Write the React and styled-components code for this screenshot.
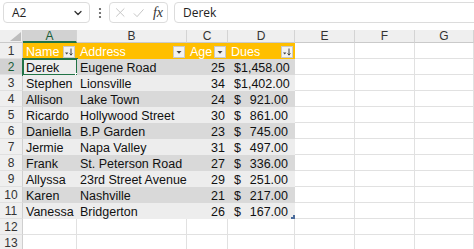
import React from 'react'
import styled, { createGlobalStyle } from 'styled-components'
import { ChevronDown } from 'lucide-react'

const GlobalStyle = createGlobalStyle`
  html, body {
    margin: 0;
    padding: 0;
    background: #fff;
    overflow: hidden;
  }
  body {
    font-family: "Liberation Sans", Arial, sans-serif;
  }
  * { box-sizing: border-box; }
`

const columns = [
  { key: 'A', w: 54 },
  { key: 'B', w: 110 },
  { key: 'C', w: 41 },
  { key: 'D', w: 67 },
  { key: 'E', w: 60 },
  { key: 'F', w: 60 },
  { key: 'G', w: 60 },
]

const people = [
  ['Derek', 'Eugene Road', 25, '1,458.00'],
  ['Stephen', 'Lionsville', 34, '1,402.00'],
  ['Allison', 'Lake Town', 24, '921.00'],
  ['Ricardo', 'Hollywood Street', 30, '861.00'],
  ['Daniella', 'B.P Garden', 23, '745.00'],
  ['Jermie', 'Napa Valley', 31, '497.00'],
  ['Frank', 'St. Peterson Road', 27, '336.00'],
  ['Allyssa', '23rd Street Avenue', 29, '251.00'],
  ['Karen', 'Nashville', 21, '217.00'],
  ['Vanessa', 'Bridgerton', 26, '167.00'],
]

const headers = [
  { label: 'Name', icon: 'sort' },
  { label: 'Address', icon: 'drop' },
  { label: 'Age', icon: 'drop' },
  { label: 'Dues', icon: 'sort' },
]

const FilterIcon = ({ kind }) => (
  <svg width="10" height="10" viewBox="0 0 10 10">
    {kind === 'drop' ? (
      <path d="M2.5 4 L7.5 4 L5 6.8 Z" fill="#444" />
    ) : (
      <>
        <path d="M1 5.5 L4.4 5.5 L2.7 7.5 Z" fill="#444" />
        <path d="M7 1.5 L7 8" stroke="#444" strokeWidth="1" />
        <path d="M5.6 6.4 L7 8.2 L8.4 6.4" stroke="#444" strokeWidth="1" fill="none" />
      </>
    )}
  </svg>
)

const Spreadsheet = () => {
  const rows = []
  for (let r = 1; r <= 13; r++) rows.push(r)

  const renderCell = (r, ci) => {
    const col = columns[ci]
    if (r === 1 && ci < 4) {
      const h = headers[ci]
      return (
        <HeadCell key={col.key}>
          <span>{h.label}</span>
          <FilterButton>
            <FilterIcon kind={h.icon} />
          </FilterButton>
        </HeadCell>
      )
    }
    if (r >= 2 && r <= 11 && ci < 4) {
      const p = people[r - 2]
      const band = r % 2 === 0 ? 'dark' : 'light'
      const selected = r === 2 && ci === 0
      const last = r === 11 && ci === 3
      if (ci === 3) {
        return (
          <BodyCell key={col.key} $band={band} $money>
            <span>$</span>
            <span>{p[3]}</span>
            {last && <ResizeCorner />}
          </BodyCell>
        )
      }
      return (
        <BodyCell key={col.key} $band={selected ? 'light' : band} $align={ci === 2 ? 'right' : 'left'}>
          {p[ci]}
          {selected && (
            <>
              <Selection />
              <FillHandle />
            </>
          )}
        </BodyCell>
      )
    }
    return <EmptyCell key={col.key} />
  }

  return (
    <Page>
      <GlobalStyle />
      <Toolbar>
        <NameBox>
          <span>A2</span>
          <ChevronDown size={12} strokeWidth={2.6} color="#333" />
        </NameBox>
        <Dots>
          <svg width="4" height="12" viewBox="0 0 4 12">
            <circle cx="2" cy="2" r="1.1" fill="#555" />
            <circle cx="2" cy="6" r="1.1" fill="#555" />
            <circle cx="2" cy="10" r="1.1" fill="#555" />
          </svg>
        </Dots>
        <FxBox>
          <svg width="13" height="13" viewBox="0 0 13 13">
            <path d="M1.5 1.5 L11.5 11.5 M11.5 1.5 L1.5 11.5" stroke="#c4c4c4" strokeWidth="1.2" />
          </svg>
          <svg width="14" height="12" viewBox="0 0 14 12">
            <path d="M1 6.5 L5 10.5 L13 1.5" stroke="#c4c4c4" strokeWidth="1.2" fill="none" />
          </svg>
          <FxLabel>fx</FxLabel>
        </FxBox>
        <Formula>Derek</Formula>
      </Toolbar>
      <Sheet>
        <Corner>
          <svg width="11" height="9" viewBox="0 0 11 9">
            <path d="M11 0 L11 9 L0 9 Z" fill="#bdbdbd" />
          </svg>
        </Corner>
        {columns.map((c) => (
          <ColHead key={c.key} $selected={c.key === 'A'}>
            {c.key}
          </ColHead>
        ))}
        {rows.map((r) => (
          <React.Fragment key={r}>
            <RowHead $selected={r === 2}>{r}</RowHead>
            {columns.map((c, ci) => renderCell(r, ci))}
          </React.Fragment>
        ))}
      </Sheet>
    </Page>
  )
}

export default Spreadsheet

const Page = styled.div`
  width: 474px;
  height: 249px;
  overflow: hidden;
`

const Toolbar = styled.div`
  display: flex;
  align-items: stretch;
  height: 23px;
  padding: 2px 0 0 3px;
  font-family: "Open Sans", "Noto Sans", sans-serif;
  font-size: 12px;
  color: #222;
`

const Box = styled.div`
  border: 1px solid #dcdcdc;
  border-radius: 4px;
  background: #fff;
  display: flex;
  align-items: center;
`

const NameBox = styled(Box)`
  width: 87px;
  justify-content: space-between;
  padding: 0 5px 0 8px;
`

const Dots = styled.div`
  width: 19px;
  display: flex;
  align-items: center;
  justify-content: center;
`

const FxBox = styled(Box)`
  width: 59px;
  padding: 0 4px 0 5px;
  gap: 7px;
`

const FxLabel = styled.span`
  font-family: "Liberation Serif", "Times New Roman", serif;
  font-style: italic;
  font-size: 14px;
  color: #333;
  margin-left: 2px;
`

const Formula = styled(Box)`
  flex: 1;
  margin-left: 6px;
  margin-right: -10px;
  padding-left: 8px;
`

const Sheet = styled.div`
  display: grid;
  grid-template-columns: 23px 54px 110px 41px 67px 60px 60px 1fr;
  grid-template-rows: 13px repeat(13, 16px);
  margin-top: 7px;
  font-size: 12.5px;
  color: #111;
`

const Corner = styled.div`
  background: #efefef;
  border-right: 1px solid #d0d0d0;
  border-bottom: 1px solid #cacaca;
  display: flex;
  align-items: flex-end;
  justify-content: flex-end;
  padding: 0 1px 1px 0;
`

const ColHead = styled.div`
  background: ${(p) => (p.$selected ? '#d2d2d2' : '#efefef')};
  color: ${(p) => (p.$selected ? '#185c37' : '#333')};
  border-right: 1px solid #d4d4d4;
  border-bottom: ${(p) => (p.$selected ? '2px solid #217346' : '1px solid #cacaca')};
  display: flex;
  align-items: center;
  justify-content: center;
  font-size: 12px;
  line-height: 1;
`

const RowHead = styled.div`
  background: ${(p) => (p.$selected ? '#d2d2d2' : '#efefef')};
  color: ${(p) => (p.$selected ? '#185c37' : '#333')};
  border-right: ${(p) => (p.$selected ? '1px solid #217346' : '1px solid #cfcfcf')};
  border-bottom: 1px solid #e0e0e0;
  display: flex;
  align-items: center;
  justify-content: center;
  font-size: 12px;
  padding-top: 1px;
`

const HeadCell = styled.div`
  background: #ffbf00;
  color: #fff;
  display: flex;
  align-items: center;
  justify-content: space-between;
  padding: 1px 2px 0 3px;
  white-space: nowrap;
`

const FilterButton = styled.div`
  width: 12px;
  height: 12px;
  background: #f2f2f2;
  border: 1px solid #c9c9c9;
  display: flex;
  align-items: center;
  justify-content: center;
`

const bands = { dark: '#d9d9d9', light: '#ededed' }

const BodyCell = styled.div`
  position: relative;
  background: ${(p) => bands[p.$band]};
  display: flex;
  align-items: center;
  justify-content: ${(p) => (p.$money ? 'space-between' : p.$align === 'right' ? 'flex-end' : 'flex-start')};
  padding: ${(p) => (p.$money ? '1px 7px 0 6px' : '1px 3px 0 3px')};
  white-space: nowrap;
`

const Selection = styled.div`
  position: absolute;
  inset: -1px -1px -1px -1px;
  border: 2px solid #217346;
  pointer-events: none;
`

const FillHandle = styled.div`
  position: absolute;
  right: -4px;
  bottom: -4px;
  width: 6px;
  height: 6px;
  background: #217346;
  border: 1px solid #fff;
`

const ResizeCorner = styled.div`
  position: absolute;
  right: 0;
  bottom: 0;
  width: 4px;
  height: 4px;
  border-right: 2px solid #4a6b9a;
  border-bottom: 2px solid #4a6b9a;
`

const EmptyCell = styled.div`
  border-right: 1px solid #e1e1e1;
  border-bottom: 1px solid #e1e1e1;
`
